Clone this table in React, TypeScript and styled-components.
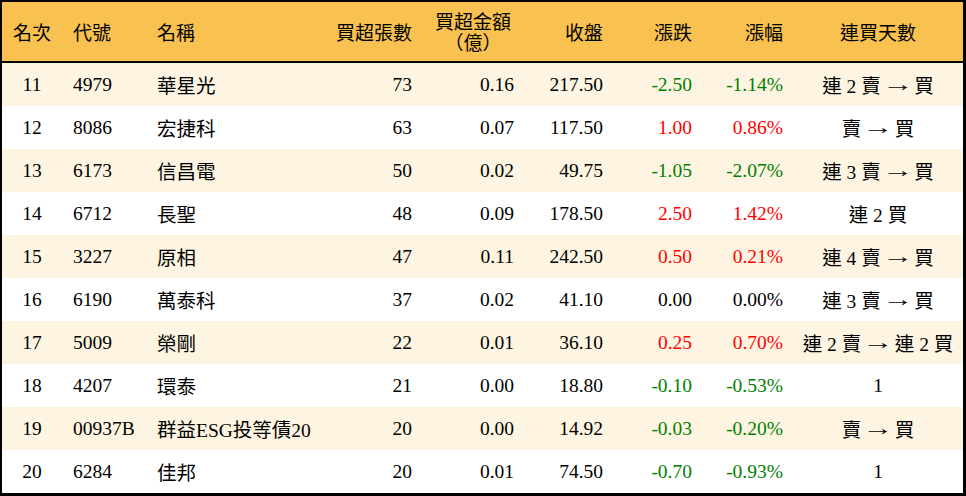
import React from 'react';
import styled, { createGlobalStyle } from 'styled-components';

//Global
const GlobalStyle = createGlobalStyle`
    html, body {
        margin: 0;
        padding: 0;
        background: #fff;
    }
    body {
        font-family: "Liberation Serif", "Noto Sans CJK TC", serif;
        color: #000;
    }
`;

//Styled Components
const COLUMNS = '60px 84px 176px 100px 102px 89px 89px 91px 170px';

const Board = styled.div`
    width: 966px;
    height: 496px;
    box-sizing: border-box;
    border-style: solid;
    border-color: #000;
    border-width: 2px 3px 3px 2px;
    background: #fff;
    overflow: hidden;
`;

const HeaderRow = styled.div`
    display: grid;
    grid-template-columns: ${COLUMNS};
    height: 59px;
    background: #f8c150;
    border-bottom: 2px solid #000;
`;

const Row = styled.div<{ $odd: boolean }>`
    display: grid;
    grid-template-columns: ${COLUMNS};
    height: 43px;
    background: ${p => (p.$odd ? '#fdf5e2' : '#fff')};
`;

type Align = 'left' | 'right' | 'center';

const Cell = styled.div<{ $align: Align; $tone?: 'up' | 'down' }>`
    display: flex;
    align-items: center;
    justify-content: ${p => (p.$align === 'left' ? 'flex-start' : p.$align === 'right' ? 'flex-end' : 'center')};
    padding: ${p => (p.$align === 'left' ? '0 0 0 11px' : p.$align === 'right' ? '0 10px 0 0' : '0')};
    font-size: 19.5px;
    white-space: pre;
    color: ${p => (p.$tone === 'up' ? '#ff0000' : p.$tone === 'down' ? '#008000' : '#000')};
`;

const HeadCell = styled(Cell)`
    font-size: 19px;
`;

const TwoLine = styled.span`
    display: flex;
    flex-direction: column;
    align-items: center;
    line-height: 21px;
    margin-top: 2px;
`;

const Arrow = styled.span`
    display: inline-block;
    font-family: "Liberation Serif", serif;
    transform: scaleX(1.6);
    margin: 0 7px;
`;

//Data
type Stock = {
    rank: number;
    code: string;
    name: string;
    lots: number;
    amount: string;
    close: string;
    change: string;
    pct: string;
    streak: string;
};

const stocks: Stock[] = [
    { rank: 11, code: '4979', name: '華星光', lots: 73, amount: '0.16', close: '217.50', change: '-2.50', pct: '-1.14%', streak: '連 2 賣 → 買' },
    { rank: 12, code: '8086', name: '宏捷科', lots: 63, amount: '0.07', close: '117.50', change: '1.00', pct: '0.86%', streak: '賣 → 買' },
    { rank: 13, code: '6173', name: '信昌電', lots: 50, amount: '0.02', close: '49.75', change: '-1.05', pct: '-2.07%', streak: '連 3 賣 → 買' },
    { rank: 14, code: '6712', name: '長聖', lots: 48, amount: '0.09', close: '178.50', change: '2.50', pct: '1.42%', streak: '連 2 買' },
    { rank: 15, code: '3227', name: '原相', lots: 47, amount: '0.11', close: '242.50', change: '0.50', pct: '0.21%', streak: '連 4 賣 → 買' },
    { rank: 16, code: '6190', name: '萬泰科', lots: 37, amount: '0.02', close: '41.10', change: '0.00', pct: '0.00%', streak: '連 3 賣 → 買' },
    { rank: 17, code: '5009', name: '榮剛', lots: 22, amount: '0.01', close: '36.10', change: '0.25', pct: '0.70%', streak: '連 2 賣 → 連 2 買' },
    { rank: 18, code: '4207', name: '環泰', lots: 21, amount: '0.00', close: '18.80', change: '-0.10', pct: '-0.53%', streak: '1' },
    { rank: 19, code: '00937B', name: '群益ESG投等債20', lots: 20, amount: '0.00', close: '14.92', change: '-0.03', pct: '-0.20%', streak: '賣 → 買' },
    { rank: 20, code: '6284', name: '佳邦', lots: 20, amount: '0.01', close: '74.50', change: '-0.70', pct: '-0.93%', streak: '1' },
];

const toneOf = (value: string) => {
    const n = parseFloat(value);
    if (n > 0) return 'up' as const;
    if (n < 0) return 'down' as const;
    return undefined;
};

// splits "連 2 賣 → 買" so the arrow gets its own font and spacing
const renderStreak = (streak: string) => {
    const parts = streak.split('→').map(p => p.trim());
    return parts.map((part, i) => (
        <React.Fragment key={i}>
            {part}
            {i < parts.length - 1 && <Arrow>→</Arrow>}
        </React.Fragment>
    ));
};

export default function App() {
    return (
        <>
            <GlobalStyle />
            <Board>
                <HeaderRow>
                    <HeadCell $align="center">名次</HeadCell>
                    <HeadCell $align="left">代號</HeadCell>
                    <HeadCell $align="left">名稱</HeadCell>
                    <HeadCell $align="right">買超張數</HeadCell>
                    <HeadCell $align="center">
                        <TwoLine>
                            <span>買超金額</span>
                            <span>（億）</span>
                        </TwoLine>
                    </HeadCell>
                    <HeadCell $align="right">收盤</HeadCell>
                    <HeadCell $align="right">漲跌</HeadCell>
                    <HeadCell $align="right">漲幅</HeadCell>
                    <HeadCell $align="center">連買天數</HeadCell>
                </HeaderRow>

                {stocks.map((s, i) => (
                    <Row key={s.code} $odd={i % 2 === 0}>
                        <Cell $align="center">{s.rank}</Cell>
                        <Cell $align="left">{s.code}</Cell>
                        <Cell $align="left">{s.name}</Cell>
                        <Cell $align="right">{s.lots}</Cell>
                        <Cell $align="right">{s.amount}</Cell>
                        <Cell $align="right">{s.close}</Cell>
                        <Cell $align="right" $tone={toneOf(s.change)}>{s.change}</Cell>
                        <Cell $align="right" $tone={toneOf(s.pct)}>{s.pct}</Cell>
                        <Cell $align="center">{renderStreak(s.streak)}</Cell>
                    </Row>
                ))}
            </Board>
        </>
    );
}
